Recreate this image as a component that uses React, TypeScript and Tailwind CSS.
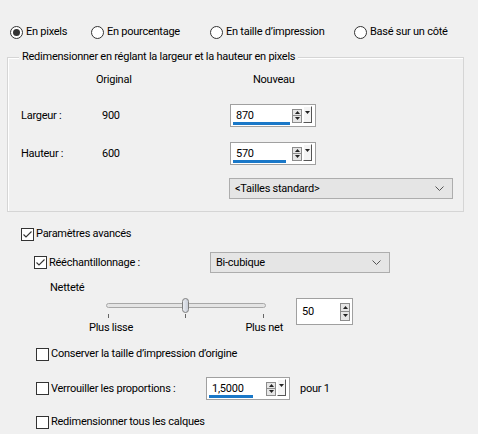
import React from "react";

function Radio({ label, checked }: { label: string; checked?: boolean }) {
  return (
    <div className="flex items-center gap-[3px]">
      <div className="w-[13px] h-[13px] rounded-full border border-[#333] bg-white flex items-center justify-center">
        {checked && <div className="w-[7px] h-[7px] rounded-full bg-[#333]" />}
      </div>
      <span>{label}</span>
    </div>
  );
}

function Check({ checked }: { checked?: boolean }) {
  return (
    <div className="w-[13px] h-[13px] shrink-0 border border-[#333] bg-white flex items-center justify-center">
      {checked && (
        <svg width="11" height="11" viewBox="0 0 11 11">
          <path d="M1.5 5.5 L4 8 L9.5 2.5" fill="none" stroke="#333" strokeWidth="1.1" />
        </svg>
      )}
    </div>
  );
}

function Arrow({ up }: { up?: boolean }) {
  return (
    <svg width="5" height="3" viewBox="0 0 5 3">
      <path d={up ? "M0 3 L2.5 0 L5 3 Z" : "M0 0 L5 0 L2.5 3 Z"} fill="#222" />
    </svg>
  );
}

function SpinBox({
  value,
  width,
  height,
  bar,
  dropdown,
}: {
  value: string;
  width: string;
  height: string;
  bar?: string;
  dropdown?: boolean;
}) {
  return (
    <div className={`relative flex items-center bg-white border border-[#a0a0a0] ${width} ${height}`}>
      <span className="flex-1 pl-[5px]">{value}</span>
      {bar && <div className={`absolute left-[2px] bottom-[1px] h-[3px] bg-[#1a78c8] ${bar}`} />}
      <div className={`flex flex-col ${dropdown ? "mr-[1px]" : "mr-[2px]"}`}>
        <div className={`w-[10px] ${dropdown ? "h-[7px]" : "h-[9px]"} bg-[#e6e6e6] border border-[#8c8c8c] flex items-center justify-center`}>
          <Arrow up />
        </div>
        <div className={`w-[10px] ${dropdown ? "h-[7px]" : "h-[9px]"} bg-[#e6e6e6] border border-t-0 border-[#8c8c8c] flex items-center justify-center`}>
          <Arrow />
        </div>
      </div>
      {dropdown && (
        <div className="w-[9px] h-[17px] mr-[3px] self-start mt-[1px] bg-[#f4f4f4] border-l border-t border-l-white border-t-white border-r border-b border-r-[#555] border-b-[#555] flex items-start justify-center pt-[4px]">
          <Arrow />
        </div>
      )}
    </div>
  );
}

function Combo({ label, width }: { label: string; width: string }) {
  return (
    <div className={`h-[21px] flex items-center justify-between bg-[#e5e5e5] border border-[#adadad] pl-[5px] pr-[8px] ${width}`}>
      <span>{label}</span>
      <svg width="9" height="5" viewBox="0 0 9 5">
        <path d="M0.5 0.5 L4.5 4.5 L8.5 0.5" fill="none" stroke="#555" strokeWidth="1" />
      </svg>
    </div>
  );
}

export default function App() {
  return (
    <div className="w-[478px] h-[434px] overflow-hidden bg-[#f0f0f0] text-[11px] tracking-[-0.25px] leading-[16px] text-black font-['Roboto',sans-serif] pt-[24px]">
      {/* mode radios */}
      <div className="flex h-[16px] pl-[10px]">
        <div className="w-[81px]">
          <Radio label="En pixels" checked />
        </div>
        <div className="w-[119px]">
          <Radio label="En pourcentage" />
        </div>
        <div className="w-[144px]">
          <Radio label="En taille d’impression" />
        </div>
        <Radio label="Basé sur un côté" />
      </div>

      {/* pixel group */}
      <div className="ml-[7px] mt-[17px] w-[457px] h-[155px] border border-[#d5d5d5] shadow-[inset_1px_1px_0_#fff]">
        <div className="-mt-[9px] ml-[11px] w-fit bg-[#f0f0f0] px-[3px]">
          Redimensionner en réglant la largeur et la hauteur en pixels
        </div>
        <div className="flex mt-[7px] h-[16px]">
          <span className="ml-[88px] w-[157px]">Original</span>
          <span>Nouveau</span>
        </div>
        <div className="flex items-center mt-[16px]">
          <span className="ml-[13px] w-[81px]">Largeur :</span>
          <span className="w-[128px]">900</span>
          <SpinBox value="870" width="w-[86px]" height="h-[23px]" bar="w-[57px]" dropdown />
        </div>
        <div className="flex items-center mt-[15px]">
          <span className="ml-[13px] w-[81px]">Hauteur :</span>
          <span className="w-[128px]">600</span>
          <SpinBox value="570" width="w-[86px]" height="h-[23px]" bar="w-[53px]" dropdown />
        </div>
        <div className="mt-[13px] ml-[221px]">
          <Combo label="<Tailles standard>" width="w-[224px]" />
        </div>
      </div>

      {/* advanced */}
      <div className="flex items-center gap-[2px] mt-[14px] ml-[21px] h-[16px]">
        <Check checked />
        <span>Paramètres avancés</span>
      </div>
      <div className="flex items-center mt-[10px] ml-[34px] h-[21px]">
        <div className="flex items-center gap-[2px] w-[176px]">
          <Check checked />
          <span>Rééchantillonnage :</span>
        </div>
        <Combo label="Bi-cubique" width="w-[180px]" />
      </div>
      <div className="mt-[7px] ml-[50px] h-[16px]">Netteté</div>

      <div className="flex items-start mt-[2px] ml-[89px]">
        <div className="w-[194px]">
          <div className="relative h-[15px] flex items-center">
            <div className="ml-[17px] w-[160px] h-[5px] rounded-full border border-[#a8a8a8] bg-[#e4e4e4]" />
            <div className="absolute left-[93px] top-0 w-[7px] h-[15px] rounded-full border border-[#7d7d7d] bg-[linear-gradient(90deg,#e9ecf2,#c9ced8)]" />
          </div>
          <div className="flex h-[5px] mt-[1px]">
            <div className="ml-[19px] w-px h-[4px] bg-[#666]" />
            <div className="ml-[76px] w-px h-[4px] bg-[#666]" />
            <div className="ml-[77px] w-px h-[4px] bg-[#666]" />
          </div>
          <div className="flex justify-between mt-[1px]">
            <span>Plus lisse</span>
            <span>Plus net</span>
          </div>
        </div>
        <div className="ml-[13px]">
          <SpinBox value="50" width="w-[57px]" height="h-[27px]" />
        </div>
      </div>

      <div className="flex items-center gap-[2px] mt-[10px] ml-[36px] h-[16px]">
        <Check />
        <span>Conserver la taille d’impression d’origine</span>
      </div>
      <div className="flex items-center mt-[15px] ml-[36px] h-[23px]">
        <div className="flex items-center gap-[2px] w-[170px]">
          <Check />
          <span>Verrouiller les proportions :</span>
        </div>
        <SpinBox value="1,5000" width="w-[84px]" height="h-[23px]" bar="w-[44px]" dropdown />
        <span className="ml-[10px]">pour 1</span>
      </div>
      <div className="flex items-center gap-[2px] mt-[14px] ml-[36px] h-[16px]">
        <Check />
        <span>Redimensionner tous les calques</span>
      </div>
    </div>
  );
}
